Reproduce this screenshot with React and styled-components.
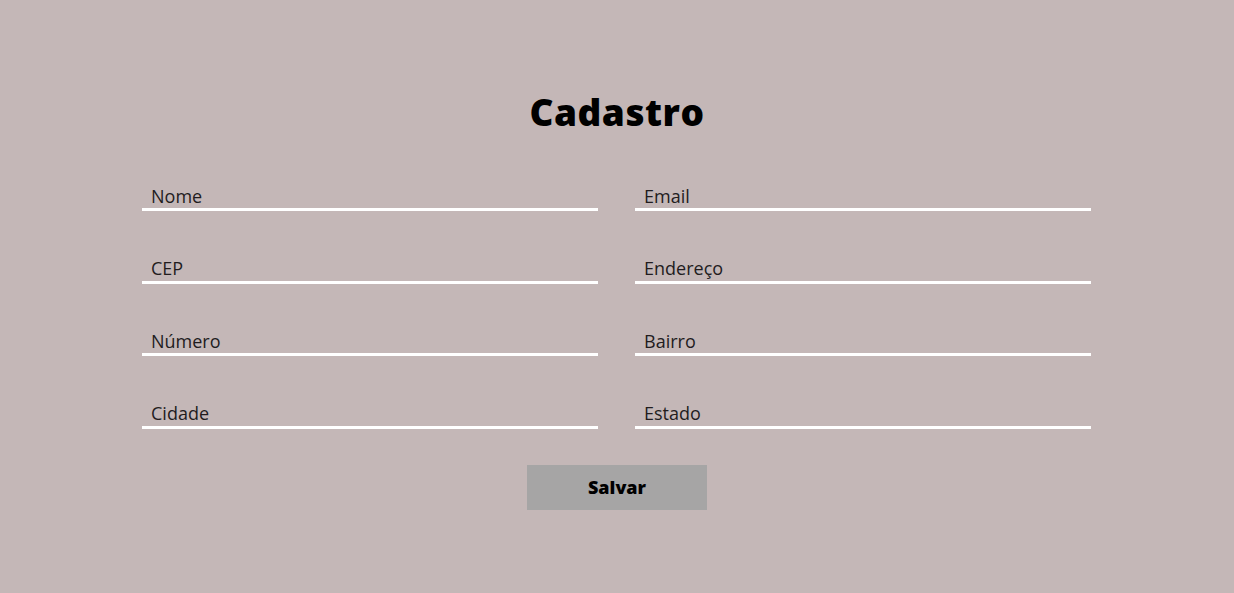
import React, { useState } from 'react';
import styled, { createGlobalStyle } from 'styled-components';

const GlobalStyle = createGlobalStyle`
    body {
        margin: 0;
        background-color: #c4b7b7;
        font-family: "Open Sans", "Liberation Sans", sans-serif;
    }
`

const Page = styled.div`
    display: flex;
    flex-direction: column;
    align-items: center;
    padding-top: 86px;
    min-height: 593px;
    box-sizing: border-box;
`

const Title = styled.h1`
    margin: 0 0 46px 0;
    font-size: 37px;
    font-weight: 800;
    color: #000;
    letter-spacing: 0.5px;
`

const Form = styled.form`
    display: flex;
    flex-direction: column;
    align-items: center;
`

const Grid = styled.div`
    display: grid;
    grid-template-columns: 456px 456px;
    column-gap: 37px;
    row-gap: 44.5px;
    margin-left: -1px;
`

const Input = styled.input`
    width: 100%;
    height: 28px;
    box-sizing: border-box;
    border: none;
    border-bottom: 3px solid #fff;
    background: transparent;
    padding: 0 0 0 9px;
    font-family: inherit;
    font-size: 18px;
    color: #222;
    outline: none;
    &::placeholder {
        color: #221c1e;
    }
`

const SaveBtn = styled.button`
    margin-top: 36px;
    width: 180px;
    height: 45px;
    border: none;
    background-color: #a6a5a5;
    font-family: inherit;
    font-size: 18px;
    font-weight: 800;
    color: #000;
    cursor: pointer;
`

const fields = [
    ["nome", "Nome"],
    ["email", "Email"],
    ["cep", "CEP"],
    ["endereco", "Endereço"],
    ["numero", "Número"],
    ["bairro", "Bairro"],
    ["cidade", "Cidade"],
    ["estado", "Estado"],
]

const App = () => {
    const [values, setValues] = useState({});

    const onChange = (event) => {
        const { target: { name, value } } = event;
        setValues(prev => ({ ...prev, [name]: value }));
    }

    const onSubmit = (event) => {
        event.preventDefault();
    }

    return (
        <>
            <GlobalStyle />
            <Page>
                <Title>Cadastro</Title>
                <Form onSubmit={onSubmit}>
                    <Grid>
                        {fields.map(([name, label]) => (
                            <Input key={name} name={name} placeholder={label} value={values[name] || ""} onChange={onChange} />
                        ))}
                    </Grid>
                    <SaveBtn type="submit">Salvar</SaveBtn>
                </Form>
            </Page>
        </>
    )
}

export default App;
